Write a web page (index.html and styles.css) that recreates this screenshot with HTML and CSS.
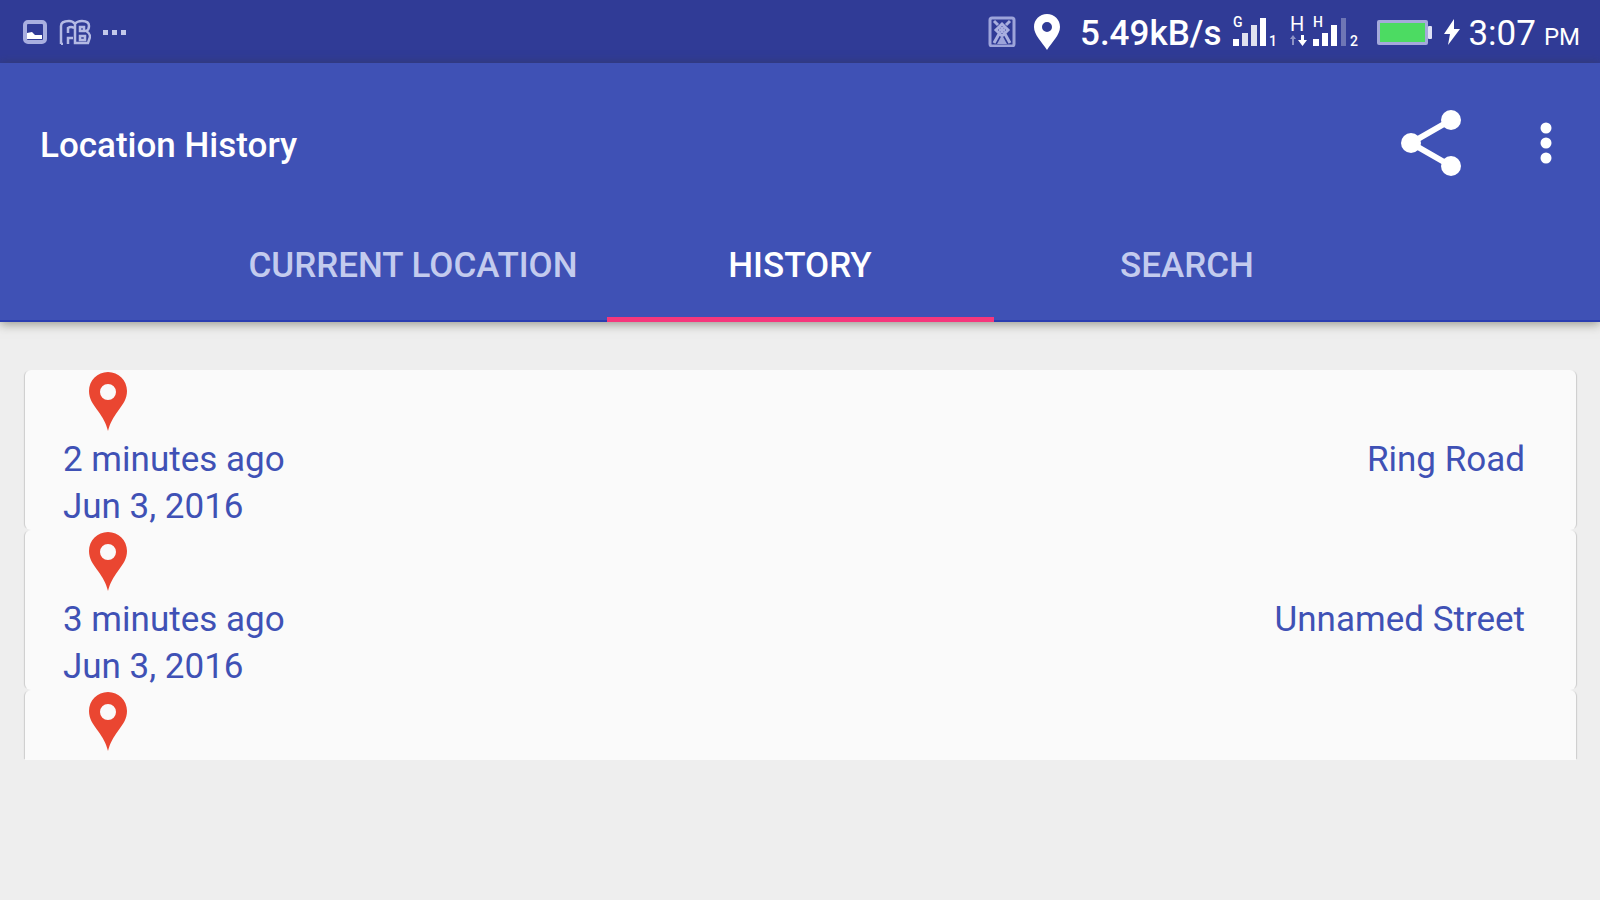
FILE: index.html
```html
<!DOCTYPE html>
<html lang="en">
  <head>
    <meta charset="UTF-8" />
    <meta name="viewport" content="width=device-width, initial-scale=1.0" />
    <title>Location History</title>
    <link rel="stylesheet" href="styles.css">
  </head>
  <body>
    <div class="status-bar">
      <div class="status-left">
        <svg width="24" height="24" viewBox="0 0 24 24">
          <rect x="2" y="2" width="20" height="20" rx="3" fill="none" stroke="#a9afe0" stroke-width="4"/>
          <path d="M4 19v-6l5-1 3 3h7v4z" fill="#fff"/>
        </svg>
        <svg width="32" height="26" viewBox="0 0 32 26" fill="none" stroke="#b4bae4" stroke-width="2.500">
          <path d="M2 25V7q0-5 8-5 4 0 6 3 2-3 7-3 7 0 7 5 0 4-3 5 4 2 4 6l-2 6H16V6M2 25h2M9 25v-6h5M9 14V9q3-2 6 0M21 8h4v4h-4zM21 17h5v4h-5z"/>
        </svg>
        <svg width="24" height="6" viewBox="0 0 24 6" fill="#c3c8ea">
          <rect y="1" width="5" height="5"/><rect x="9" y="1" width="5" height="5"/><rect x="18" y="1" width="5" height="5"/>
        </svg>
      </div>
      <div class="status-right">
        <svg class="sim" width="28" height="31" viewBox="0 0 28 31">
          <rect x="2" y="2" width="24" height="28" rx="2" fill="none" stroke="#9da4da" stroke-width="3"/>
          <path d="M6 5l4 4M22 5l-4 4M14 8l6 6-6 6-6-6zM14 11v6M11 14h6M11 18l-5 9M17 18l5 9" fill="none" stroke="#a9afdf" stroke-width="3"/>
          <path d="M14 19l5 9H9z" fill="#9da4da"/>
        </svg>
        <svg class="gps" width="26" height="36" viewBox="0 0 26 36">
          <path fill="#fff" fill-rule="evenodd" d="M13 0C5.600 0 0 5.600 0 13c0 8 8 15 13 23 5-8 13-15 13-23C26 5.600 20.400 0 13 0zm0 8a5 5 0 1 1 0 10 5 5 0 0 1 0-10z"/>
        </svg>
        <span class="speed">5.49kB/s</span>
        <svg class="signal" width="45" height="44" viewBox="0 -7 45 44" fill="#fff">
          <text x="0" y="10" class="tiny">G</text>
          <rect y="22" width="6" height="7"/><rect x="9" y="16" width="6" height="13" opacity=".85"/>
          <rect x="18" y="8" width="6" height="21" opacity=".85"/><rect x="27" y="1" width="6" height="28"/>
          <text x="36" y="29" class="tiny">1</text>
        </svg>
        <svg class="signal-wide" width="69" height="44" viewBox="0 -7 69 44" fill="#fff">
          <text x="0" y="14" class="net">H</text>
          <path d="M3 18l3 4H4v6H2v-6H0z" opacity=".45"/>
          <path d="M11 18h3v5h3l-4.500 6L8 23h3z"/>
          <text x="23" y="10" class="tiny">H</text>
          <rect x="23" y="22" width="6" height="7"/><rect x="32" y="16" width="6" height="13"/>
          <rect x="41" y="8" width="6" height="21"/><rect x="51" y="1" width="5" height="28" opacity=".3"/>
          <text x="60" y="29" class="tiny">2</text>
        </svg>
        <svg class="battery" width="56" height="26" viewBox="0 0 56 26">
          <rect x="1" y="1" width="51" height="25" rx="2" fill="#a5aadb"/>
          <rect x="52" y="7" width="4" height="13" rx="1" fill="#dfe2f5"/>
          <rect x="4" y="4" width="45" height="19" fill="#4cdb62"/>
        </svg>
        <svg class="bolt" width="16" height="26" viewBox="0 0 16 26">
          <path d="M10 0L0 15h6L4 26l12-16h-6z" fill="#fff"/>
        </svg>
        <span class="clock">3:07</span>
        <span class="ampm">PM</span>
      </div>
    </div>

    <header>
      <div class="toolbar">
        <h1>Location History</h1>
        <div class="actions">
          <button type="button" aria-label="Share">
            <svg width="62" height="68" viewBox="0 0 62 68" fill="#fff">
              <path d="M51 11L11 34l40 23" fill="none" stroke="#fff" stroke-width="6"/>
              <circle cx="11" cy="34" r="10"/><circle cx="51" cy="11" r="10"/><circle cx="51" cy="57" r="10"/>
            </svg>
          </button>
          <button type="button" aria-label="More options">
            <svg width="12" height="42" viewBox="0 0 12 42" fill="#fff">
              <circle cx="6" cy="6" r="5.500"/><circle cx="6" cy="21" r="5.500"/><circle cx="6" cy="36" r="5.500"/>
            </svg>
          </button>
        </div>
      </div>
      <nav>
        <a href="#">CURRENT LOCATION</a>
        <a class="active" href="#">HISTORY</a>
        <a href="#">SEARCH</a>
      </nav>
    </header>

    <main>
      <article class="card">
        <svg class="pin" viewBox="0 0 38 59"><path fill="#ea4631" fill-rule="evenodd" d="M19 0C8.500 0 0 8.500 0 19c0 8 4 13 9 20 5 7 8 12 10 20 2-8 5-13 10-20 5-7 9-12 9-20C38 8.500 29.500 0 19 0zm0 12a8 8 0 1 1 0 16 8 8 0 0 1 0-16z"/></svg>
        <div class="row"><span>2 minutes ago</span><span>Ring Road</span></div>
        <div class="row"><span>Jun 3, 2016</span></div>
      </article>
      <article class="card">
        <svg class="pin" viewBox="0 0 38 59"><path fill="#ea4631" fill-rule="evenodd" d="M19 0C8.500 0 0 8.500 0 19c0 8 4 13 9 20 5 7 8 12 10 20 2-8 5-13 10-20 5-7 9-12 9-20C38 8.500 29.500 0 19 0zm0 12a8 8 0 1 1 0 16 8 8 0 0 1 0-16z"/></svg>
        <div class="row"><span>3 minutes ago</span><span>Unnamed Street</span></div>
        <div class="row"><span>Jun 3, 2016</span></div>
      </article>
      <article class="card cut">
        <svg class="pin" viewBox="0 0 38 59"><path fill="#ea4631" fill-rule="evenodd" d="M19 0C8.500 0 0 8.500 0 19c0 8 4 13 9 20 5 7 8 12 10 20 2-8 5-13 10-20 5-7 9-12 9-20C38 8.500 29.500 0 19 0zm0 12a8 8 0 1 1 0 16 8 8 0 0 1 0-16z"/></svg>
      </article>
    </main>
  </body>
</html>
```
FILE: styles.css
```css
* {
  margin: 0;
  padding: 0;
  box-sizing: border-box;
  font-family: Roboto, sans-serif;
}
body {
  background-color: #eee;
  color: #3f51b5;
}
svg {
  display: block;
  flex-shrink: 0;
}

/* status bar */
.status-bar {
  display: flex;
  justify-content: space-between;
  align-items: center;
  height: 63px;
  padding: 0 20px 0 23px;
  background-color: #303b96;
  color: #fff;
}
.status-left,
.status-right {
  display: flex;
  align-items: center;
}
.status-left {
  gap: 12px;
}
.sim {
  margin-right: 18px;
}
.gps {
  margin-right: 20px;
}
.speed,
.clock {
  padding-top: 4px;
  font-size: 35px;
  line-height: 40px;
}
.speed {
  font-weight: 500;
}
.signal,
.signal-wide {
  margin-left: 12px;
}
.battery {
  margin-left: 17px;
}
.bolt {
  margin: 0 8px 0 12px;
}
.ampm {
  margin-left: 8px;
  padding-top: 10px;
  font-size: 24px;
  line-height: 32px;
}
.tiny {
  font-size: 14px;
  font-weight: 500;
}
.net {
  font-size: 20px;
}

/* app bar */
header {
  background-color: #3f51b5;
  border-bottom: 2px solid #2a3db0;
  box-shadow: 0 2px 10px rgba(60, 60, 40, 0.5);
}
.toolbar {
  display: flex;
  justify-content: space-between;
  align-items: center;
  height: 160px;
  padding: 0 48px 0 40px;
}
h1 {
  padding-top: 6px;
  color: #fff;
  font-size: 35px;
  line-height: 48px;
  font-weight: 500;
}
.actions {
  display: flex;
  align-items: center;
  gap: 78px;
}
button {
  background: none;
  border: none;
  cursor: pointer;
}
nav {
  display: grid;
  grid-template-columns: repeat(3, 387px);
  justify-content: center;
  margin-bottom: -2px;
}
nav a {
  padding: 19px 0 27px;
  border-bottom: 5px solid transparent;
  color: #c3cbee;
  font-size: 35px;
  line-height: 48px;
  font-weight: 500;
  text-align: center;
  text-decoration: none;
}
nav a.active {
  color: #fff;
  border-bottom-color: #f5377c;
}

/* history list */
main {
  padding: 48px 24px 48px 25px;
}
.card {
  padding: 2px 51px 0 38px;
  background-color: #fafafa;
  border-radius: 6px;
  box-shadow: -2px 0 1px -1px #ccc, 2px 0 1px -1px #ccc;
}
.card.cut {
  padding-bottom: 4px;
  border-radius: 6px 6px 0 0;
}
.pin {
  width: 38px;
  height: 59px;
  margin: 0 0 5px 26px;
}
.row {
  display: flex;
  justify-content: space-between;
  font-size: 35px;
  line-height: 47px;
}
```
